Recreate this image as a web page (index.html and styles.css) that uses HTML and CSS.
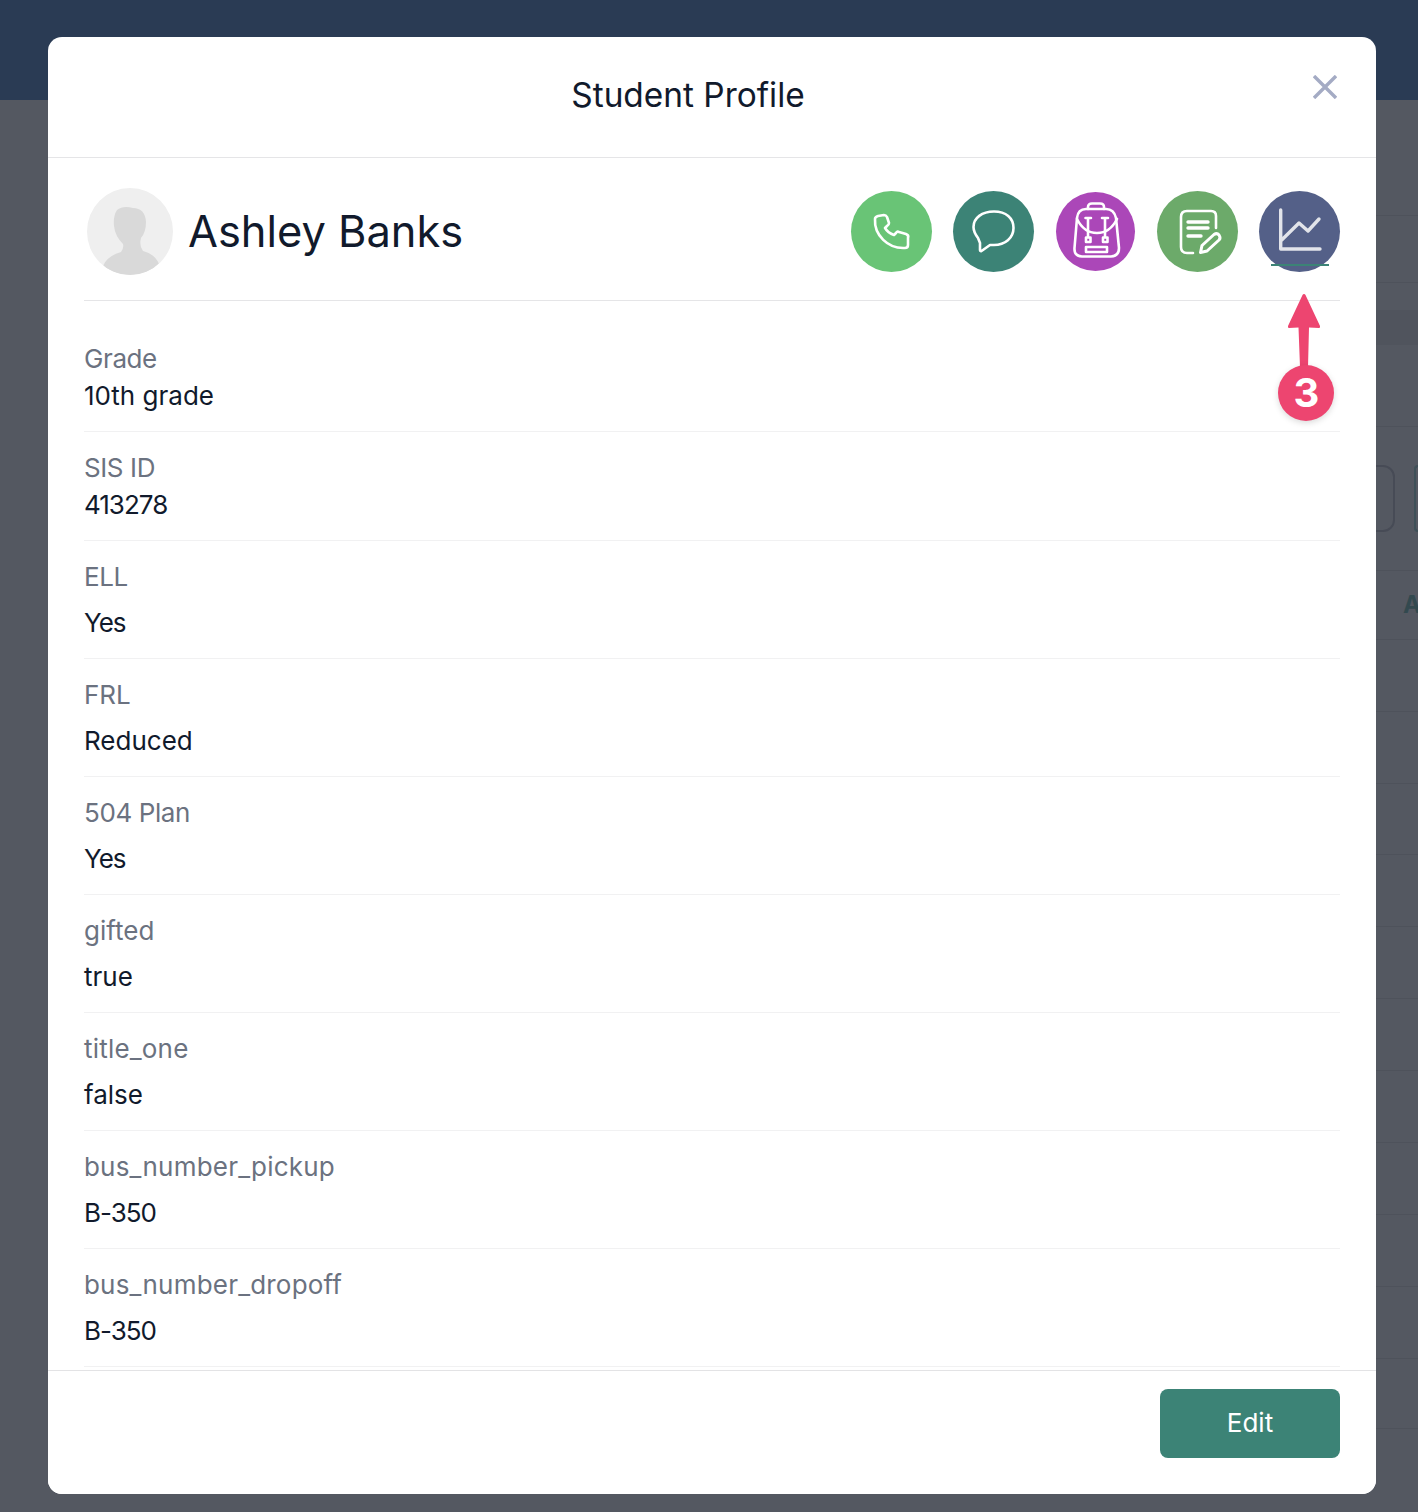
FILE: index.html
```html
<!DOCTYPE html>
<html lang="en">

<head>
    <meta charset="UTF-8">
    <meta name="viewport" content="width=device-width, initial-scale=1.0">
    <title>Student Profile</title>
    <link rel="stylesheet" href="styles.css">
</head>

<body>
    <div class="topbar"></div>

    <div class="backdrop">
        <div class="sidebar"></div>
        <div class="main">
            <div class="bg-row" style="height: 88px"></div>
            <div class="bg-row bg-row-lined" style="height: 28px"></div>
            <div class="bg-row bg-row-lined" style="height: 67px"></div>
            <div class="bg-row" style="height: 27px"></div>
            <div class="bg-row bg-band" style="height: 35px"></div>
            <div class="bg-row bg-row-lined" style="height: 82px"></div>
            <div class="bg-row bg-row-lined bg-actions" style="height: 144px">
                <span class="bg-btn"></span>
                <span class="bg-btn bg-btn-cut"></span>
            </div>
            <div class="bg-row bg-row-lined bg-heading" style="height: 69px">A</div>
            <div class="bg-row bg-row-lined" style="height: 72px"></div>
            <div class="bg-row bg-row-lined" style="height: 72px"></div>
            <div class="bg-row bg-row-lined" style="height: 71px"></div>
            <div class="bg-row bg-row-lined" style="height: 72px"></div>
            <div class="bg-row bg-row-lined" style="height: 72px"></div>
            <div class="bg-row bg-row-lined" style="height: 72px"></div>
            <div class="bg-row bg-row-lined" style="height: 72px"></div>
            <div class="bg-row bg-row-lined" style="height: 72px"></div>
            <div class="bg-row bg-row-lined" style="height: 72px"></div>
            <div class="bg-row bg-row-lined" style="height: 72px"></div>
            <div class="bg-row bg-row-lined" style="height: 70px"></div>
        </div>
    </div>

    <div class="modal">
        <div class="modal-header">
            <h2>Student Profile</h2>
            <svg class="close-icon" width="24" height="24" viewBox="0 0 24 24">
                <path d="M1 1 L23 23 M23 1 L1 23" />
            </svg>
        </div>

        <div class="modal-body">
            <div class="profile">
                <div class="avatar">
                    <svg width="87" height="87" viewBox="0 0 87 87">
                        <path fill="#d9d9d9" d="M30 22 Q36 17 46 20 Q58 20 59 34 Q59 44 54 50 Q52 58 56 63 Q68 66 72 76 A43.5 43.5 0 0 1 16 78 Q20 68 34 64 Q37 60 36 56 Q28 48 27 38 Q26 28 30 22 Z" />
                    </svg>
                </div>
                <h1>Ashley Banks</h1>

                <div class="actions">
                    <div class="action action-phone">
                        <svg width="81" height="81" viewBox="0 0 81 81">
                            <path d="M27 25 L33 24 Q35 24 36 26 L38 32 Q38 34 36 35 L34 37 Q37 42 43 44 L45 42 Q46 40 48 41 L55 43 Q58 44 57 47 L57 54 Q57 57 54 57 C37 58 23 44 24 28 Q24 26 27 25 Z" />
                        </svg>
                    </div>
                    <div class="action action-chat">
                        <svg width="81" height="81" viewBox="0 0 81 81">
                            <path d="M25 47 C22 43 20.5 40 20.5 36 C20.5 27 29 20.5 41 20.5 C53 20.5 60.5 27 60.5 37 C60.5 47 52 54 41 54 L37 54 L28.5 60 Q27 60.5 27 59 L27 52 Z" />
                        </svg>
                    </div>
                    <div class="action action-bag">
                        <svg width="79" height="79" viewBox="0 0 79 79">
                            <path d="M30 17 H50 Q58 17 60 26 L63 56 Q63 64 55 64.5 H26 Q18 64 18.5 56 L21 26 Q22 17 30 17 Z" />
                            <path d="M32 17 V15 Q32 11.5 36 11.5 H44 Q48 11.5 48 15 V17" />
                            <path d="M21 27 Q28 41 41 41 Q54 41 61 27" />
                            <path d="M29.5 26 H35 M32 26 V45 M46 26 H52 M49 26 V45" />
                            <path d="M30 45.5 H34.5 V50 H30 Z M47 45.5 H51.5 V50 H47 Z" />
                            <path d="M30 55 H51 V60 H30 Z" />
                        </svg>
                    </div>
                    <div class="action action-note">
                        <svg width="81" height="81" viewBox="0 0 81 81">
                            <path d="M59 37 V25 Q59 20 54 20 H30 Q24 20 24 26 V56 Q24 62 30 62 H36" />
                            <path class="thick" d="M31 31 H51 M31 37 H51 M31 45 H44" />
                            <path class="pencil" d="M43.5 61.5 L45 54.5 L57 43.5 Q60 41.5 62 44 Q64 47 62 49 L50 60 Z" />
                        </svg>
                    </div>
                    <div class="action action-chart">
                        <svg width="81" height="81" viewBox="0 0 81 81">
                            <path class="thick" d="M21.7 19 V58 H61 M22.7 49 L40 32 L49 40 L60 28" />
                        </svg>
                    </div>
                </div>
            </div>

            <div class="fields">
                <div class="field">
                    <div class="field-label tight">Grade</div>
                    <div class="field-value">10th grade</div>
                </div>
                <div class="field">
                    <div class="field-label tight">SIS ID</div>
                    <div class="field-value digits">413278</div>
                </div>
                <div class="field field-wide">
                    <div class="field-label tight">ELL</div>
                    <div class="field-value digits">Yes</div>
                </div>
                <div class="field field-wide">
                    <div class="field-label">FRL</div>
                    <div class="field-value">Reduced</div>
                </div>
                <div class="field field-wide">
                    <div class="field-label tight">504 Plan</div>
                    <div class="field-value digits">Yes</div>
                </div>
                <div class="field field-wide">
                    <div class="field-label">gifted</div>
                    <div class="field-value">true</div>
                </div>
                <div class="field field-wide">
                    <div class="field-label loose">title_one</div>
                    <div class="field-value">false</div>
                </div>
                <div class="field field-wide">
                    <div class="field-label loose">bus_number_pickup</div>
                    <div class="field-value digits">B-350</div>
                </div>
                <div class="field field-wide">
                    <div class="field-label loose">bus_number_dropoff</div>
                    <div class="field-value digits">B-350</div>
                </div>
            </div>
        </div>

        <div class="modal-footer">
            <button class="edit-btn">Edit</button>
        </div>
    </div>

    <svg class="callout-arrow" width="36" height="76" viewBox="0 0 36 76">
        <path d="M18 1 Q19 1 19.5 2 L34 33 Q34.5 35 33 35 L23 34.5 L22 74 H14 L12.5 34.5 L3 35 Q1.5 35 2 33 L16.5 2 Q17 1 18 1 Z" />
    </svg>
    <div class="callout-badge">3</div>
</body>

</html>
```

FILE: styles.css
```css
body {
    font-family: Inter, "Noto Sans", sans-serif;
    background-color: #545861;
    margin: 0;
    height: 1512px;
    overflow: hidden;
    position: relative;
}

.topbar {
    height: 100px;
    background-color: #2a3b54;
}

.backdrop {
    display: flex;
}

.sidebar {
    width: 222px;
    flex-shrink: 0;
}

.main {
    flex: 1;
    min-width: 0;
    overflow: hidden;
}

.bg-row {
    box-sizing: border-box;
}

.bg-row-lined {
    border-bottom: 1px solid #4e525b;
}

.bg-band {
    background-color: #50545d;
}

.bg-actions {
    display: flex;
    gap: 19px;
    padding-top: 38px;
    padding-left: 900px;
}

.bg-btn {
    flex: 1;
    height: 67px;
    box-sizing: border-box;
    border: 2px solid #474b56;
    border-radius: 12px;
}

.bg-btn-cut {
    flex: none;
    width: 4px;
    border-right: none;
    border-radius: 12px 0 0 12px;
    border-color: #3f5058;
}

.bg-heading {
    color: #33494f;
    font-size: 24px;
    font-weight: 700;
    line-height: 68px;
    padding-left: 1181px;
    white-space: nowrap;
    overflow: hidden;
}

.modal {
    position: absolute;
    top: 37px;
    left: 48px;
    width: 1328px;
    height: 1457px;
    background-color: #fff;
    border-radius: 14px;
    display: flex;
    flex-direction: column;
    overflow: hidden;
}

.modal-header {
    height: 120px;
    flex-shrink: 0;
    padding-right: 48px;
    border-bottom: 1px solid #e5e5e7;
    display: flex;
    align-items: center;
    justify-content: center;
    position: relative;
}

.modal-header h2 {
    margin: 0;
    font-size: 33.4px;
    font-weight: 400;
    color: #111a2c;
    position: relative;
    top: -2px;
}

.close-icon {
    position: absolute;
    top: 38px;
    right: 39px;
}

.close-icon path {
    fill: none;
    stroke: #a4abc4;
    stroke-width: 3.4;
}

.modal-body {
    flex: 1;
    padding: 0 36px;
    overflow: hidden;
}

.profile {
    height: 142px;
    border-bottom: 1px solid #e5e5e7;
    display: flex;
    align-items: center;
}

.avatar {
    width: 86px;
    height: 87px;
    margin-left: 3px;
    margin-right: 16px;
    margin-top: 4px;
    border-radius: 50%;
    background-color: #efefef;
    overflow: hidden;
}

.avatar svg {
    display: block;
}

.profile h1 {
    margin: 0;
    font-size: 43.4px;
    font-weight: 400;
    color: #111a2c;
    position: relative;
    top: 2px;
    left: -1px;
}

.actions {
    margin-left: auto;
    margin-top: 5px;
    display: flex;
    align-items: center;
    gap: 21px;
}

.action {
    width: 81px;
    height: 81px;
    border-radius: 50%;
    display: flex;
    align-items: center;
    justify-content: center;
    position: relative;
}

.action svg {
    display: block;
}

.action path {
    fill: none;
    stroke: #fff;
    stroke-width: 2.6;
    stroke-linecap: round;
    stroke-linejoin: round;
}

.action path.thick {
    stroke-width: 3.4;
}

.action path.pencil {
    stroke-width: 3;
}

.action-phone {
    background-color: #69c476;
}

.action-chat {
    background-color: #3c8376;
}

.action-bag {
    width: 79px;
    height: 79px;
    margin: 0 1px;
    background-color: #ab47b8;
}

.action-note {
    background-color: #6caa6a;
}

.action-chart {
    background-color: #546088;
}

.action-chart path.thick {
    stroke: #e2e4ea;
}

.action-chart::after {
    content: "";
    position: absolute;
    left: 12px;
    bottom: 6px;
    width: 58px;
    height: 2px;
    background-color: #3c8376;
}

.fields {
    padding-top: 22px;
}

.field {
    padding: 18px 0 17px;
    border-bottom: 1px solid #f1f1f2;
    font-size: 26px;
    line-height: 36px;
}

.field-label {
    color: #6b7280;
    margin-bottom: 1px;
}

.field-wide .field-label {
    margin-bottom: 10px;
}

.field-value {
    color: #111a2c;
}

.tight {
    letter-spacing: -0.4px;
}

.loose {
    letter-spacing: 0.2px;
}

.digits {
    letter-spacing: -1px;
}

.modal-footer {
    flex-shrink: 0;
    height: 124px;
    box-sizing: border-box;
    border-top: 1px solid #e3e3e5;
    padding: 18px 36px 0;
    display: flex;
    justify-content: flex-end;
    align-items: flex-start;
    background-color: #fff;
}

.edit-btn {
    width: 180px;
    height: 69px;
    padding-bottom: 3px;
    background-color: #3c8376;
    border: none;
    border-radius: 8px;
    color: #fff;
    font-family: inherit;
    font-size: 26px;
    cursor: pointer;
}

.callout-arrow {
    position: absolute;
    left: 1286px;
    top: 293px;
}

.callout-arrow path {
    fill: #ed4570;
}

.callout-badge {
    position: absolute;
    left: 1278px;
    top: 365px;
    width: 56px;
    height: 56px;
    border-radius: 50%;
    background-color: #ed4570;
    color: #fff;
    font-family: Inter, sans-serif;
    font-size: 40px;
    font-weight: 700;
    line-height: 56px;
    text-align: center;
    text-indent: 1px;
    box-shadow: 0 2px 6px rgba(0, 0, 0, 0.15);
}
```
